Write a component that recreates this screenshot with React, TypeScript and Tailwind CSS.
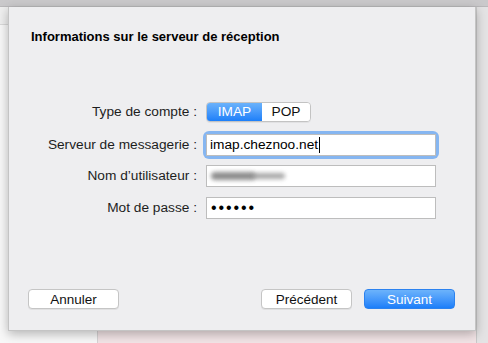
import React from 'react';

const font = { fontFamily: '"Liberation Sans", Arial, sans-serif' };

function Row({ label, children, className }: { label: string; children: React.ReactNode; className?: string }) {
  return (
    <div className={`flex h-[22px] items-center ${className ?? ''}`}>
      <div className="w-[188px] text-right text-[13.7px] text-[#1d1d1d]">{label}</div>
      <div className="ml-[9px] flex items-center">{children}</div>
    </div>
  );
}

function Field({ children }: { children?: React.ReactNode }) {
  return (
    <div className="flex h-[22px] w-[230px] items-center border border-[#bdbdbd] bg-white pl-[3px] text-[13.7px] text-black">
      {children}
    </div>
  );
}

export default function App() {
  return (
    <div className="relative flex h-[343px] w-[488px] flex-col overflow-hidden bg-[#f6f6f6]" style={font}>
      {/* window behind the sheet */}
      <div className="h-[7px] border-b border-[#b9b8ba] bg-[#cac9cb]" />
      <div className="flex flex-1">
        <div className="flex w-[98px] flex-col border-r border-[#d6d3d4] bg-[#f8f8f8]">
          <div className="h-[18px] border-b border-[#d9d9d9] bg-[#efefef]" />
        </div>
        <div className="flex-1 bg-[#f2e4e6]" />
        <div className="w-[12px] border-l border-[#c9c9c9] bg-[#e4e3e4]" />
      </div>

      {/* sheet */}
      <div className="absolute left-[8px] top-[7px] flex h-[324px] w-[468px] flex-col border-x border-b border-[#c4c4c4] bg-[#eeeef0] shadow-[0_3px_10px_rgba(0,0,0,0.28)]">
        <div className="pl-[22px] pt-[22px] text-[13px] font-bold leading-[16px] text-black">
          Informations sur le serveur de réception
        </div>

        <div className="mt-[56px] flex flex-col">
          <Row label="Type de compte :">
            <div className="flex h-[20px] overflow-hidden rounded-[4px] border border-[#c3c3c3] text-[13.7px] shadow-[0_1px_0_rgba(0,0,0,0.05)]">
              <div className="flex w-[55px] items-center justify-center bg-gradient-to-b from-[#6ab2fb] to-[#1b7ff9] text-white">IMAP</div>
              <div className="flex w-[48px] items-center justify-center bg-white text-[#111]">POP</div>
            </div>
          </Row>
          <Row label="Serveur de messagerie :" className="mt-[11px]">
            <div className="rounded-[3px] shadow-[0_0_0_3px_#86b6f1]">
              <Field>
                <span>imap.cheznoo.net</span>
                <span className="ml-[1px] h-[16px] w-[1px] bg-black" />
              </Field>
            </div>
          </Row>
          <Row label="Nom d’utilisateur :" className="mt-[9px]">
            <Field>
              <div className="ml-[1px] flex items-center">
                <div className="h-[8px] w-[44px] rounded-full bg-[#7a7a7a] opacity-85 blur-[2px]" />
                <div className="-ml-[4px] h-[6px] w-[34px] rounded-full bg-[#8a8a8a] opacity-75 blur-[2px]" />
              </div>
            </Field>
          </Row>
          <Row label="Mot de passe :" className="mt-[10px]">
            <Field>
              <span className="pl-[1px] text-[16px] leading-none tracking-[1.9px]">••••••</span>
            </Field>
          </Row>
        </div>

        <div className="mt-auto flex items-center pb-[21px] pl-[19px] pr-[20px] text-[13.5px]">
          <button className="h-[20px] w-[91px] rounded-[4px] border border-[#c5c5c5] bg-white text-[#111] shadow-[0_1px_0_rgba(0,0,0,0.06)]">
            Annuler
          </button>
          <div className="flex-1" />
          <button className="h-[20px] w-[91px] rounded-[4px] border border-[#c5c5c5] bg-white text-[#111] shadow-[0_1px_0_rgba(0,0,0,0.06)]">
            Précédent
          </button>
          <button className="ml-[12px] h-[20px] w-[91px] rounded-[4px] border border-[#2c82ef] bg-gradient-to-b from-[#6cb3fb] to-[#1a7ef9] text-white">
            Suivant
          </button>
        </div>
      </div>
    </div>
  );
}
